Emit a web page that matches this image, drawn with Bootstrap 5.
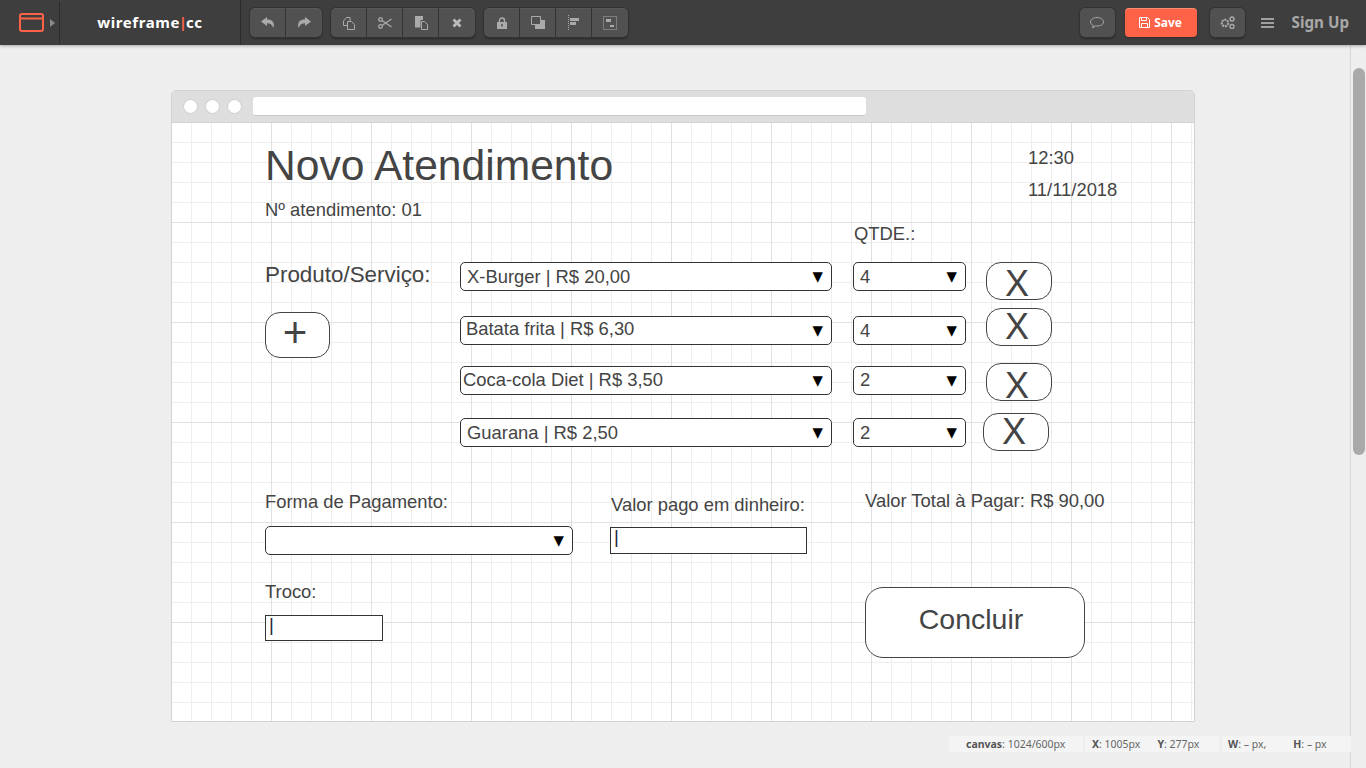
<!DOCTYPE html>
<html lang="en">
  <head>
    <meta charset="UTF-8" />
    <meta name="viewport" content="width=device-width, initial-scale=1.0" />
    <title>wireframe.cc</title>
    <link href="https://cdn.jsdelivr.net/npm/bootstrap@5.3.0/dist/css/bootstrap.min.css" rel="stylesheet" />
    <script src="https://cdn.jsdelivr.net/npm/bootstrap@5.3.0/dist/js/bootstrap.bundle.min.js"></script>
    <style>
      html, body { height: 100%; overflow: hidden; }
      body { background: #eee; font-family: "Liberation Sans", Arial, sans-serif; color: #444; }

      /* top toolbar */
      .topbar { height: 45px; background: #3e3e3e; box-shadow: 0 1px 3px rgba(0,0,0,.3); position: relative; z-index: 2; }
      .logo-cell { width: 60px; height: 42px; border-right: 1px solid #2c2c2c; padding-left: 19px; gap: 6px; }
      .logo-arrow { width: 0; height: 0; border-left: 5px solid #8a8a8a; border-top: 4px solid transparent; border-bottom: 4px solid transparent; }
      .brand-cell { width: 181px; height: 45px; border-right: 1px solid #2c2c2c; font-family: "Noto Sans", sans-serif; font-weight: 700; font-size: 15px; color: #fff; letter-spacing: .6px; }
      .brand-cell i { font-style: normal; color: #ff6347; font-weight: 700; margin: 0 -1.500px; }
      .tool-groups { margin-left: 9px; gap: 9px; }
      .tool-set { border-radius: 5px; box-shadow: 0 0 0 1px #333, 0 2px 2px #2a2a2a; }
      .tool-btn { width: 36px; height: 29px; padding: 0; background: #515151; border: 0; border-right: 1px solid #333; border-radius: 0; box-shadow: inset 0 1px 0 rgba(255,255,255,.05); }
      .tool-btn:first-child { border-radius: 5px 0 0 5px; }
      .tool-btn:last-child { border-radius: 0 5px 5px 0; border-right: 0; }
      .tool-btn.lone { width: 35px; border-radius: 5px; border-right: 0; box-shadow: 0 0 0 1px #333, 0 2px 2px #2a2a2a; }
      .tool-btn svg { display: block; margin: auto; }
      .save-btn { width: 72px; height: 29px; padding: 0; margin: 0 13px 0 10px; border: 0; border-radius: 4px; background: #ff6347; color: #fff; font-family: "Noto Sans", sans-serif; font-size: 12px; font-weight: 700; box-shadow: inset 0 1px 0 rgba(255,255,255,.25), 0 1px 2px #2a2a2a; gap: 4px; }
      .save-btn:hover { background: #ff6347; color: #fff; }
      .right-tools { margin-left: auto; padding-right: 17px; }
      .signup { font-family: "Noto Sans", sans-serif; font-weight: 700; font-size: 15.200px; color: #a8a8a8; margin-left: 18px; }
      .burger { width: 13px; height: 10px; margin-left: 16px; border-top: 2px solid #a0a0a0; border-bottom: 2px solid #a0a0a0; position: relative; }
      .burger::after { content: ""; position: absolute; left: 0; right: 0; top: 2px; height: 2px; background: #a0a0a0; }

      /* scrollbar */
      .scroll-track { position: absolute; top: 45px; right: 0; bottom: 0; width: 16px; background: #eee; border-left: 1px solid #d8d8d8; }
      .scroll-thumb { position: absolute; top: 23px; left: 2px; width: 12px; height: 387px; background: #a9a9a9; border-radius: 6px; }

      /* browser frame */
      .frame { width: 1024px; margin: 45px 0 0 171px; border: 1px solid #d2d2d2; border-radius: 5px 5px 0 0; background: #fff; }
      .frame-head { height: 32px; background: #dedede; padding-left: 12px; gap: 9px; border-bottom: 1px solid #d2d2d2; border-radius: 4px 4px 0 0; }
      .frame-dot { width: 13px; height: 13px; border-radius: 50%; background: #fff; box-shadow: 0 0 0 1px #d2d2d2; }
      .frame-url { width: 613px; height: 19px; margin-left: 3px; background: #fff; border-bottom: 1px solid #c8c8c8; border-radius: 3px; }

      /* wireframe canvas: items sit at their own place on it */
      .canvas {
        position: relative; height: 598px; color: #444;
        background-color: #fff;
        background-image:
          linear-gradient(#e0e0e0 1px, transparent 1px),
          linear-gradient(90deg, #e0e0e0 1px, transparent 1px),
          linear-gradient(#eee 1px, transparent 1px),
          linear-gradient(90deg, #eee 1px, transparent 1px);
        background-size: 100px 100px, 100px 100px, 20px 20px, 20px 20px;
        background-position: 0 -1px, -1px 0, 0 -1px, -1px 0;
      }
      .wf { position: absolute; white-space: nowrap; line-height: 1.15; font-size: 18.400px; }
      .wf-select { border: 1px solid #333; border-radius: 5px; background: #fff; height: 29px; padding: 0 8px 0 6px; }
      .wf-select .caret { color: #000; font-size: 13.500px; font-family: "DejaVu Sans", sans-serif; }
      .wf-btn { border: 1px solid #444; background: #fff; color: #444; padding: 0; border-radius: 15px; font-family: "Liberation Sans", sans-serif; }
      .wf-x { width: 66px; height: 38px; font-size: 36px; line-height: 36px; padding-right: 4px; }
      .wf-input { border: 1px solid #333; background: #fff; padding-left: 3px; line-height: 18px; color: #223; }

      #t-title { left: 93px; top: 18px; font-size: 42.600px; }
      #t-num { left: 93px; top: 76px; }
      #t-time { left: 856px; top: 24px; }
      #t-date { left: 856px; top: 56px; }
      #t-qtde { left: 682px; top: 100px; }
      #t-prod { left: 93px; top: 139px; font-size: 22.400px; }
      #b-plus { left: 93px; top: 189px; width: 65px; height: 46px; font-size: 42px; line-height: 36px; padding-right: 5px; padding-bottom: 4px; }
      #s1 { left: 288px; top: 139px; width: 372px; }
      #s2 { left: 288px; top: 193px; width: 372px; }
      #s3 { left: 288px; top: 243px; width: 372px; }
      #s4 { left: 288px; top: 295px; width: 372px; }
      #s2 > span:first-child { margin: -3px 0 0 -1px; }
      #s3 > span:first-child { margin: -2px 0 0 -4px; }
      #s4 > span:first-child { margin-top: 1px; }
      #q1 { left: 681px; top: 139px; width: 113px; }
      #q2 { left: 681px; top: 193px; width: 113px; }
      #q3 { left: 681px; top: 243px; width: 113px; }
      #q4 { left: 681px; top: 295px; width: 113px; }
      #q2 > span:first-child, #q4 > span:first-child { margin-top: 1px; }
      #q3 > span:first-child { margin-top: -1px; }
      #x1 { left: 814px; top: 139px; padding-top: 3px; }
      #x2 { left: 814px; top: 185px; }
      #x3 { left: 814px; top: 240px; padding-top: 4px; }
      #x4 { left: 811px; top: 290px; }
      #t-forma { left: 93px; top: 368px; }
      #t-valor { left: 439px; top: 371px; }
      #t-total { left: 693px; top: 367px; }
      #s-pag { left: 93px; top: 403px; width: 308px; }
      #i-valor { left: 438px; top: 404px; width: 197px; height: 27px; }
      #t-troco { left: 93px; top: 458px; }
      #i-troco { left: 93px; top: 492px; width: 118px; height: 26px; }
      #b-concluir { left: 693px; top: 464px; width: 220px; height: 71px; font-size: 28.500px; border-radius: 18px; padding: 0 8px 7px 0; }

      /* status strip */
      .status { position: absolute; right: 15px; top: 736px; gap: 2px; font-family: "Noto Sans", sans-serif; font-size: 10.500px; color: #666; }
      .status > div { background: #f4f4f4; height: 16px; line-height: 16px; }
      .status b { color: #555; }
      .st-a { width: 134px; padding-left: 17px; }
      .st-b { width: 134px; padding-left: 7px; }
      .st-c { width: 129px; padding-left: 6px; margin-left: 1px; }
      .st-b span + span { margin-left: 17px; }
      .st-c span + span { margin-left: 27px; }
    </style>
  </head>
  <body>
    <div class="topbar d-flex align-items-center">
      <div class="logo-cell d-flex align-items-center">
        <svg width="25" height="19" viewBox="0 0 25 19" fill="none" stroke="#ff6347" stroke-width="2"><rect x="1" y="1" width="23" height="17" rx="2"/><path d="M1 5.500h23"/></svg>
        <span class="logo-arrow"></span>
      </div>
      <div class="brand-cell d-flex align-items-center justify-content-center">wireframe<i>|</i>cc</div>

      <div class="tool-groups d-flex">
        <div class="tool-set d-flex">
          <button class="btn tool-btn"><svg width="14" height="12" viewBox="0 0 14 12" fill="#aaa"><path d="M6 0 0 4.500 6 9V6.200c3 0 5 1.300 6.500 4.800C14 5 11 2.500 6 2.500z"/></svg></button>
          <button class="btn tool-btn"><svg width="14" height="12" viewBox="0 0 14 12" fill="#aaa"><path d="M8 0l6 4.500L8 9V6.200c-3 0-5 1.300-6.500 4.800C0 5 3 2.500 8 2.500z"/></svg></button>
        </div>
        <div class="tool-set d-flex">
          <button class="btn tool-btn"><svg width="14" height="14" viewBox="0 0 14 14" fill="none" stroke="#aaa"><path d="M5.500 9.500h-4V5l3-3.500h3.500V5"/><path d="M5.500 5.500h4l3 3v5h-7z"/></svg></button>
          <button class="btn tool-btn"><svg width="14" height="12" viewBox="0 0 14 12" fill="none" stroke="#aaa" stroke-width="1.300"><circle cx="2.500" cy="2.500" r="1.800"/><circle cx="2.500" cy="9.500" r="1.800"/><path d="M4 3.500 13.500 10M4 8.500 13.500 2"/></svg></button>
          <button class="btn tool-btn"><svg width="14" height="14" viewBox="0 0 14 14" fill="#aaa"><path d="M1 0h8v4H6.500v7.500H1z"/><path d="M7.500 5.500h3l3 3v5h-6z" fill="#515151" stroke="#aaa"/></svg></button>
          <button class="btn tool-btn"><svg width="10" height="10" viewBox="0 0 10 10" stroke="#bbb" stroke-width="2.800"><path d="M1.500 1.500l7 7M8.500 1.500l-7 7"/></svg></button>
        </div>
        <div class="tool-set d-flex">
          <button class="btn tool-btn"><svg width="10" height="12" viewBox="0 0 10 12"><path d="M2.500 5V3.500a2.500 2.500 0 0 1 5 0V5" fill="none" stroke="#aaa" stroke-width="1.400"/><path d="M0 5h10v7H0z" fill="#aaa"/><path d="M5 7v2.500" stroke="#515151" stroke-width="1.400"/></svg></button>
          <button class="btn tool-btn"><svg width="14" height="13" viewBox="0 0 14 13"><path d="M4 4h10v9H4z" fill="#aaa"/><path d="M.5.500h9v8h-9z" fill="#515151" stroke="#aaa"/></svg></button>
          <button class="btn tool-btn"><svg width="11" height="15" viewBox="0 0 11 15" fill="#aaa"><path d="M0 0h1v1H0zM0 2h1v1H0zM0 4h1v1H0zM0 6h1v1H0zM0 8h1v1H0zM0 10h1v1H0zM0 12h1v1H0zM0 14h1v1H0z"/><path d="M2 3h9v3H2zM2 7h6v3H2z"/></svg></button>
          <button class="btn tool-btn"><svg width="14" height="14" viewBox="0 0 14 14" fill="none"><rect x=".5" y=".5" width="13" height="13" stroke="#aaa" stroke-dasharray="1 1"/><path d="M3 3h5v3H3zM7 9h4v2H7z" fill="#aaa"/></svg></button>
        </div>
      </div>

      <div class="right-tools d-flex align-items-center">
        <button class="btn tool-btn lone"><svg width="14" height="12" viewBox="0 0 14 12" fill="none" stroke="#aaa"><path d="M3.500 8.500C2 8 .5 6.800.5 5c0-2.500 3-4.500 6.500-4.500s6.500 2 6.500 4.500-3 4-6.500 4c-.5 0-1 0-1.500-.1L2.500 11z"/></svg></button>
        <button class="btn save-btn d-flex align-items-center justify-content-center"><svg width="11" height="11" viewBox="0 0 11 11" fill="none" stroke="#fff"><path d="M.5.500h8l2 2v8h-10z"/><path d="M2.500.5v3h5v-3M2.500 10.500v-4h6v4"/></svg>Save</button>
        <button class="btn tool-btn lone"><svg width="15" height="13" viewBox="0 0 15 13"><circle cx="5" cy="7" r="3.200" fill="none" stroke="#aaa" stroke-width="2.200" stroke-dasharray="2 .8"/><circle cx="12" cy="3" r="2" fill="none" stroke="#aaa" stroke-width="1.400"/><circle cx="12" cy="10.500" r="2" fill="none" stroke="#aaa" stroke-width="1.400"/></svg></button>
        <span class="burger"></span>
        <span class="signup">Sign Up</span>
      </div>
    </div>

    <div class="scroll-track"><div class="scroll-thumb"></div></div>

    <div class="frame">
      <div class="frame-head d-flex align-items-center">
        <span class="frame-dot"></span><span class="frame-dot"></span><span class="frame-dot"></span>
        <span class="frame-url"></span>
      </div>
      <div class="canvas">
        <div class="wf" id="t-title">Novo Atendimento</div>
        <div class="wf" id="t-num">Nº atendimento: 01</div>
        <div class="wf" id="t-time">12:30</div>
        <div class="wf" id="t-date">11/11/2018</div>
        <div class="wf" id="t-qtde">QTDE.:</div>
        <div class="wf" id="t-prod">Produto/Serviço:</div>
        <button class="wf wf-btn" id="b-plus">+</button>

        <div class="wf wf-select d-flex align-items-center justify-content-between" id="s1"><span>X-Burger | R$ 20,00</span><span class="caret">▼</span></div>
        <div class="wf wf-select d-flex align-items-center justify-content-between" id="s2"><span>Batata frita | R$ 6,30</span><span class="caret">▼</span></div>
        <div class="wf wf-select d-flex align-items-center justify-content-between" id="s3"><span>Coca-cola Diet | R$ 3,50</span><span class="caret">▼</span></div>
        <div class="wf wf-select d-flex align-items-center justify-content-between" id="s4"><span>Guarana | R$ 2,50</span><span class="caret">▼</span></div>

        <div class="wf wf-select d-flex align-items-center justify-content-between" id="q1"><span>4</span><span class="caret">▼</span></div>
        <div class="wf wf-select d-flex align-items-center justify-content-between" id="q2"><span>4</span><span class="caret">▼</span></div>
        <div class="wf wf-select d-flex align-items-center justify-content-between" id="q3"><span>2</span><span class="caret">▼</span></div>
        <div class="wf wf-select d-flex align-items-center justify-content-between" id="q4"><span>2</span><span class="caret">▼</span></div>

        <button class="wf wf-btn wf-x" id="x1">X</button>
        <button class="wf wf-btn wf-x" id="x2">X</button>
        <button class="wf wf-btn wf-x" id="x3">X</button>
        <button class="wf wf-btn wf-x" id="x4">X</button>

        <div class="wf" id="t-forma">Forma de Pagamento:</div>
        <div class="wf" id="t-valor">Valor pago em dinheiro:</div>
        <div class="wf" id="t-total">Valor Total à Pagar: R$ 90,00</div>
        <div class="wf wf-select d-flex align-items-center justify-content-end" id="s-pag"><span class="caret">▼</span></div>
        <div class="wf wf-input" id="i-valor">|</div>
        <div class="wf" id="t-troco">Troco:</div>
        <div class="wf wf-input" id="i-troco">|</div>
        <button class="wf wf-btn" id="b-concluir">Concluir</button>
      </div>
    </div>

    <div class="status d-flex">
      <div class="st-a"><b>canvas</b>: 1024/600px</div>
      <div class="st-b"><span><b>X</b>: 1005px</span><span><b>Y</b>: 277px</span></div>
      <div class="st-c"><span><b>W</b>: – px,</span><span><b>H</b>: – px</span></div>
    </div>
  </body>
</html>
